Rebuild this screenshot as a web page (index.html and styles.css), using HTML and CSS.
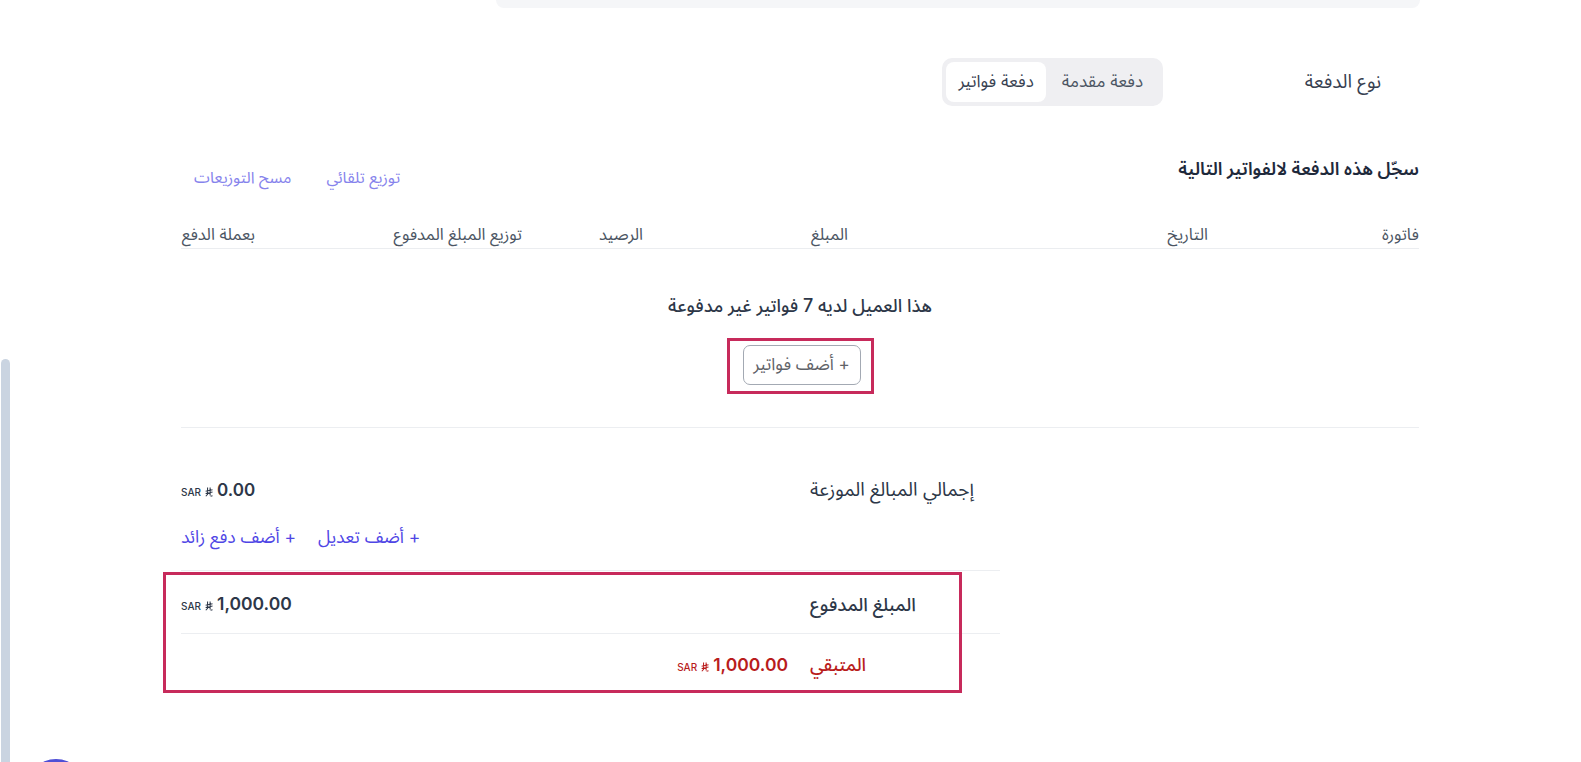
FILE: index.html
```html
<!DOCTYPE html>
<html lang="ar" dir="rtl">
<head>
<meta charset="utf-8">
<title>تسجيل دفعة</title>
<link rel="stylesheet" href="styles.css">
</head>
<body>
<div class="page">
  <div class="topbox"></div>

  <div class="type-row">
    <div class="type-label">نوع الدفعة</div>
    <div class="segmented">
      <button class="seg">دفعة مقدمة</button>
      <button class="seg seg-active">دفعة فواتير</button>
    </div>
  </div>

  <div class="section-head">
    <h2 class="section-title">سجّل هذه الدفعة لالفواتير التالية</h2>
    <div class="head-links">
      <a class="soft-link">توزيع تلقائي</a>
      <a class="soft-link">مسح التوزيعات</a>
    </div>
  </div>

  <div class="table-head">
    <div class="th">فاتورة</div>
    <div class="th">التاريخ</div>
    <div class="th">المبلغ</div>
    <div class="th">الرصيد</div>
    <div class="th">توزيع المبلغ المدفوع</div>
    <div class="th">بعملة الدفع</div>
  </div>

  <div class="empty">
    <p class="empty-text">هذا العميل لديه 7 فواتير غير مدفوعة</p>
    <span class="focus-ring"><button class="add-btn">+ أضف فواتير</button></span>
  </div>

  <div class="divider"></div>

  <div class="summary">
    <div class="sum-row total-row">
      <div class="sum-label">إجمالي المبالغ الموزعة</div>
      <div class="sum-value">
        <span class="money" dir="ltr"><span class="cur">SAR</span><svg class="riyal" viewBox="0 0 10 12" width="8" height="10"><path d="M3.2 0.5V9L1 11.3M6.4 0.5V10.4M0.8 5L9.4 3.1M0.8 8L9.4 6.1M7 11.3L9.4 10.8" fill="none" stroke="currentColor" stroke-width="1.3"/></svg><span class="num num-sm">0.00</span></span>
      </div>
    </div>
    <div class="adjust-links">
      <a class="action-link">+ أضف تعديل</a>
      <a class="action-link">+ أضف دفع زائد</a>
    </div>
    <div class="sum-divider"></div>

    <div class="highlight-group">
      <div class="sum-row paid-row">
        <div class="sum-label">المبلغ المدفوع</div>
        <div class="sum-value">
          <span class="money" dir="ltr"><span class="cur">SAR</span><svg class="riyal" viewBox="0 0 10 12" width="8" height="10"><path d="M3.2 0.5V9L1 11.3M6.4 0.5V10.4M0.8 5L9.4 3.1M0.8 8L9.4 6.1M7 11.3L9.4 10.8" fill="none" stroke="currentColor" stroke-width="1.3"/></svg><span class="num">1,000.00</span></span>
        </div>
      </div>
      <div class="sum-row remaining-row">
        <div class="sum-label">المتبقي</div>
        <div class="sum-value value-near">
          <span class="money" dir="ltr"><span class="cur">SAR</span><svg class="riyal" viewBox="0 0 10 12" width="8" height="10"><path d="M3.2 0.5V9L1 11.3M6.4 0.5V10.4M0.8 5L9.4 3.1M0.8 8L9.4 6.1M7 11.3L9.4 10.8" fill="none" stroke="currentColor" stroke-width="1.3"/></svg><span class="num">1,000.00</span></span>
        </div>
      </div>
      <div class="highlight-box"></div>
    </div>
  </div>
</div>

<div class="scroll-thumb"></div>
<div class="fab"></div>
</body>
</html>
```

FILE: styles.css
```css
html {
  overflow: hidden;
}

body {
  margin: 0;
  background: #ffffff;
  font-family: Inter, "Noto Sans Arabic", "Noto Sans", "DejaVu Sans", sans-serif;
  color: #1f2937;
}

.page {
  width: 1238px;
  margin-right: 162px;
  margin-left: auto;
}

.topbox {
  width: 924px;
  margin-right: -1px;
  height: 8px;
  background: #f5f6f8;
  border-radius: 0 0 10px 10px;
}

.type-row {
  display: flex;
  align-items: center;
  margin-top: 50px;
  padding-right: 38px;
}

.type-label {
  width: 218px;
  font-size: 19px;
  line-height: 26px;
  color: #374151;
}

.segmented {
  display: flex;
  padding: 4px;
  background: #efeff2;
  border-radius: 10px;
}

.seg {
  border: 0;
  background: transparent;
  font-family: inherit;
  font-size: 17px;
  height: 40px;
  padding: 0 16px;
  color: #4b5563;
  border-radius: 8px;
  cursor: pointer;
}

.seg-active {
  background: #ffffff;
  color: #374151;
  padding: 0 12px;
}

.section-head {
  display: flex;
  justify-content: space-between;
  align-items: flex-start;
  margin-top: 51px;
}

.section-title {
  margin: 0;
  font-size: 18px;
  line-height: 24px;
  font-weight: 600;
  color: #1e293b;
}

.head-links {
  display: flex;
  gap: 11px;
  padding-top: 9px;
  padding-left: 1px;
}

.soft-link {
  font-size: 16px;
  line-height: 22px;
  color: #8683ec;
  padding: 0 12px;
  cursor: pointer;
}

.table-head {
  display: grid;
  grid-template-columns: 211px 360px 205px 121px 267px 1fr;
  margin-top: 36px;
  padding-bottom: 4px;
  border-bottom: 1px solid #ebedf0;
}

.th {
  font-size: 16.5px;
  line-height: 20px;
  color: #4b5563;
}

.empty {
  display: flex;
  flex-direction: column;
  align-items: center;
}

.empty-text {
  margin: 45px 0 0;
  font-size: 18px;
  line-height: 24px;
  font-weight: 500;
  color: #2d3748;
}

.focus-ring {
  display: inline-flex;
  margin-top: 20px;
  padding: 4px 10px 6px 13px;
  border: 3px solid #c72a5b;
}

.add-btn {
  height: 40px;
  width: 118px;
  border: 1px solid #a3a9b3;
  border-radius: 7px;
  background: #ffffff;
  font-family: inherit;
  font-size: 17px;
  color: #5f6368;
  cursor: pointer;
}

.divider {
  height: 1px;
  background: #eceef1;
  margin-top: 33px;
}

.summary {
  width: 819px;
  margin-right: auto;
}

.sum-row {
  display: grid;
  grid-template-columns: 190px 1fr;
  align-items: center;
}

.sum-label {
  font-size: 18.5px;
  line-height: 26px;
  font-weight: 500;
  color: #2d3748;
  text-align: left;
}

.sum-value {
  text-align: left;
}

.total-row {
  margin-top: 49px;
}

.total-row .sum-label {
  font-weight: 400;
  font-size: 19px;
}

.money {
  display: inline-flex;
  align-items: baseline;
  gap: 4px;
  color: #2d3748;
}

.cur {
  font-size: 10px;
  font-weight: 500;
}

.riyal {
  align-self: center;
  margin-top: 3px;
}

.num {
  font-size: 17.5px;
  font-weight: 600;
  line-height: 26px;
}

.num-sm {
  font-size: 17px;
}

.adjust-links {
  display: flex;
  gap: 22px;
  justify-content: flex-end;
  margin-top: 23px;
}

.action-link {
  font-size: 17.5px;
  line-height: 22px;
  color: #4f46e5;
  cursor: pointer;
}

.sum-divider {
  height: 1px;
  background: #eceef1;
  margin-top: 22px;
}

.highlight-group {
  position: relative;
}

.paid-row {
  padding: 20px 0 16px;
  border-bottom: 1px solid #eceef1;
}

.remaining-row {
  padding: 18px 0 15px;
}

.remaining-row .sum-label {
  color: #b91c1c;
  font-size: 18px;
}

.remaining-row .money {
  color: #b91c1c;
}

.value-near {
  text-align: right;
  padding-right: 22px;
}

.highlight-box {
  position: absolute;
  top: 1px;
  bottom: 0;
  left: -18px;
  right: 38px;
  border: 3px solid #c72a5b;
  pointer-events: none;
}

.scroll-thumb {
  position: fixed;
  left: 1px;
  top: 359px;
  bottom: 0;
  width: 9px;
  background: #cad4e1;
  border-radius: 5px 5px 0 0;
}

.fab {
  position: fixed;
  left: 26px;
  top: 759px;
  width: 60px;
  height: 60px;
  border-radius: 50%;
  background: #4f4fd6;
}
```
